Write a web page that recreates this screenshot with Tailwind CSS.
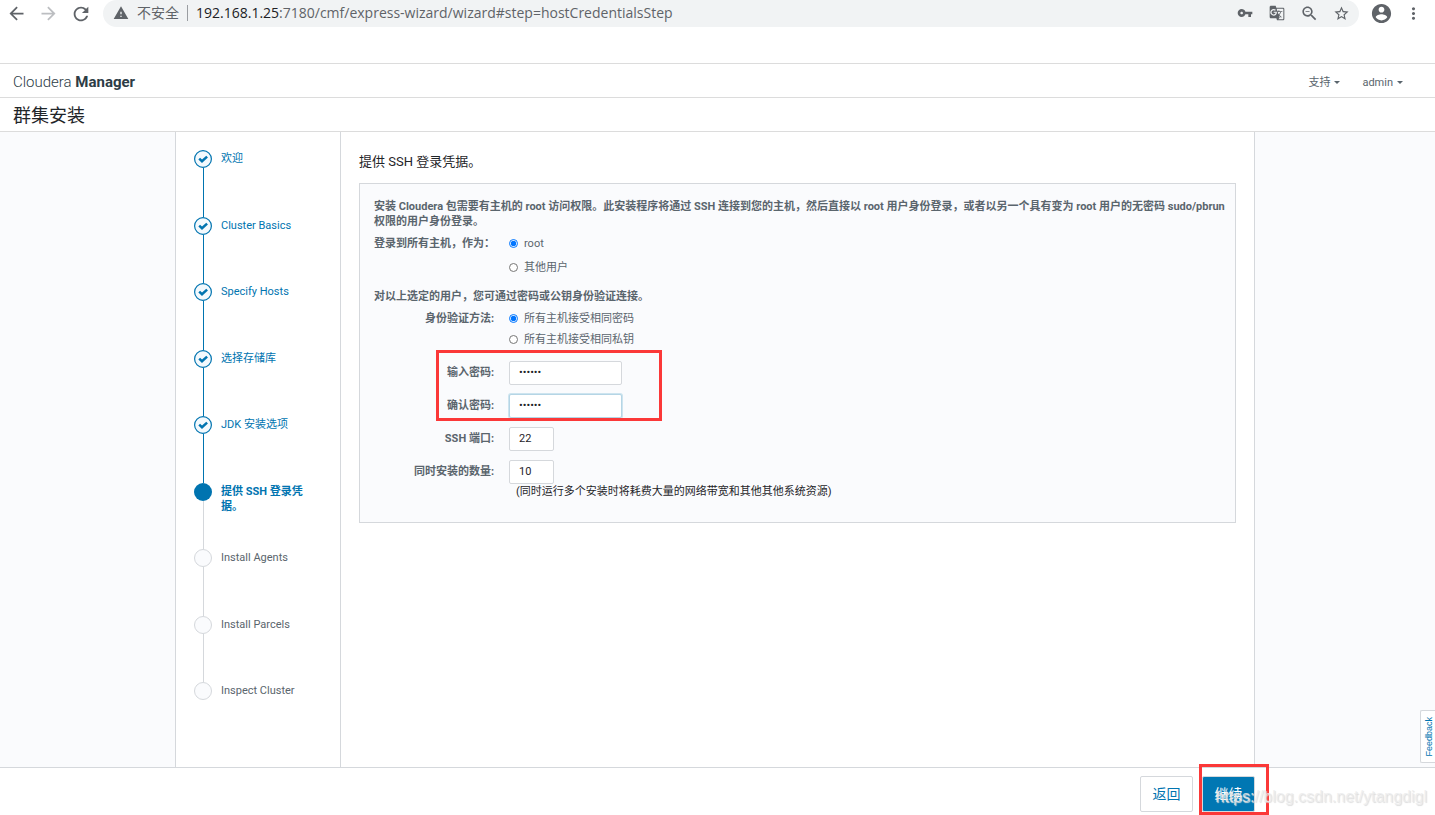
<!DOCTYPE html>
<html lang="zh-CN">
<head>
<meta charset="utf-8">
<title>群集安装 - Cloudera Manager</title>
<script src="https://cdn.jsdelivr.net/npm/@tailwindcss/browser@4"></script>
</head>
<body class="relative flex min-h-screen flex-col bg-white font-['Roboto','Noto_Sans_CJK_SC',sans-serif] text-[11px] leading-[15px] text-[#5a656d]">

<!-- Browser toolbar -->
<div class="flex h-[27px] items-center font-['Open_Sans','Noto_Sans_CJK_SC',sans-serif] text-sm text-[#5f6368]">
  <div class="flex">
    <button aria-label="后退" class="flex w-8 justify-center"><svg class="size-[21px]" viewBox="0 0 24 24" fill="currentColor"><path d="M20 11H7.83l5.59-5.59L12 4l-8 8 8 8 1.41-1.41L7.83 13H20v-2z"/></svg></button>
    <button aria-label="前进" class="flex w-8 justify-center text-[#bcbec1]"><svg class="size-[21px]" viewBox="0 0 24 24" fill="currentColor"><path d="M12 4l-1.41 1.41L16.17 11H4v2h12.17l-5.58 5.59L12 20l8-8z"/></svg></button>
    <button aria-label="重新加载" class="flex w-[33px] justify-center"><svg class="size-[22px]" viewBox="0 0 24 24" fill="currentColor"><path d="M17.65 6.35A7.958 7.958 0 0012 4c-4.42 0-7.99 3.58-7.99 8s3.57 8 7.99 8c3.73 0 6.84-2.55 7.73-6h-2.08A5.99 5.99 0 0112 18c-3.31 0-6-2.69-6-6s2.69-6 6-6c1.66 0 3.14.69 4.22 1.78L13 11h7V4l-2.35 2.35z"/></svg></button>
  </div>
  <div class="mx-[6px] flex h-full flex-1 items-center rounded-full bg-[#f1f3f4] pb-px pl-[10px] pr-[2px]">
    <svg class="size-4" viewBox="0 0 24 24" fill="currentColor"><path d="M1 21h22L12 2 1 21zm12-3h-2v-2h2v2zm0-4h-2v-4h2v4z"/></svg>
    <span class="ml-2">不安全</span>
    <span class="ml-2 mr-2 h-4 w-px bg-[#9a9da1]"></span>
    <span class="flex-1 whitespace-nowrap"><span class="text-[#202124]">192.168.1.25</span>:7180/cmf/express-wizard/wizard#step=hostCredentialsStep</span>
    <button aria-label="密码" class="flex w-8 justify-center"><svg class="size-4" viewBox="0 0 24 24" fill="currentColor"><path d="M12.65 10C11.83 7.67 9.61 6 7 6c-3.31 0-6 2.69-6 6s2.69 6 6 6c2.61 0 4.83-1.67 5.65-4H17v4h4v-4h2v-4H12.65zM7 14c-1.1 0-2-.9-2-2s.9-2 2-2 2 .9 2 2-.9 2-2 2z"/></svg></button>
    <button aria-label="翻译" class="flex w-8 justify-center"><svg class="size-4" viewBox="0 0 24 24" fill="currentColor"><path d="M21 4H11l-1-3H3c-1.1 0-2 .9-2 2v15c0 1.1.9 2 2 2h8l1 3h9c1.1 0 2-.9 2-2V6c0-1.1-.9-2-2-2zM7 16c-2.76 0-5-2.24-5-5s2.24-5 5-5c1.35 0 2.48.5 3.35 1.3L9.03 8.57c-.38-.36-1.04-.78-2.03-.78-1.74 0-3.15 1.44-3.15 3.21S5.26 14.21 7 14.21c2.01 0 2.84-1.44 2.92-2.41H7v-1.71h4.68c.07.31.12.61.12 1.02C11.8 13.97 9.89 16 7 16zm6.17-5.42h3.7c-.43 1.25-1.11 2.43-2.05 3.47-.31-.35-.6-.72-.86-1.1l-.79-2.37zm8.33 9.92c0 .55-.45 1-1 1H14l2-2.5-1.04-3.1 3.1 3.1.92-.92-3.3-3.25.02-.02c1.13-1.25 1.93-2.69 2.4-4.22H20v-1.3h-4.53V8h-1.29v1.29h-1.44L11.46 5.5h9.04c.55 0 1 .45 1 1v14z"/></svg></button>
    <button aria-label="缩小" class="flex w-8 justify-center"><svg class="size-[19px]" viewBox="0 0 24 24" fill="currentColor"><path d="M15.5 14h-.79l-.28-.27C15.41 12.59 16 11.11 16 9.5 16 5.91 13.09 3 9.5 3S3 5.91 3 9.5 5.91 16 9.5 16c1.61 0 3.09-.59 4.23-1.57l.27.28v.79l5 4.99L20.49 19l-4.99-5zm-6 0C7.01 14 5 11.99 5 9.5S7.01 5 9.5 5 14 7.01 14 9.5 11.99 14 9.5 14zM7 9h5v1H7z"/></svg></button>
    <button aria-label="收藏" class="flex w-8 justify-center"><svg class="size-[17px]" viewBox="0 0 24 24" fill="currentColor"><path d="M22 9.24l-7.19-.62L12 2 9.19 8.63 2 9.24l5.46 4.73L5.82 21 12 17.27 18.18 21l-1.63-7.03L22 9.24zM12 15.4l-3.76 2.27 1-4.28-3.32-2.88 4.38-.38L12 6.1l1.71 4.04 4.38.38-3.32 2.88 1 4.28L12 15.4z"/></svg></button>
  </div>
  <div class="flex pr-[6px]">
    <button aria-label="用户" class="flex w-8 items-center justify-center"><svg class="size-[23px]" viewBox="0 0 24 24" fill="currentColor"><path d="M12 2C6.48 2 2 6.48 2 12s4.48 10 10 10 10-4.48 10-10S17.52 2 12 2zm0 3c1.66 0 3 1.34 3 3s-1.34 3-3 3-3-1.34-3-3 1.34-3 3-3zm0 14.2c-2.5 0-4.71-1.28-6-3.22.03-1.99 4-3.08 6-3.08 1.99 0 5.97 1.09 6 3.08-1.29 1.94-3.5 3.22-6 3.22z"/></svg></button>
    <button aria-label="菜单" class="flex w-8 items-center justify-center"><svg class="size-[19px]" viewBox="0 0 24 24" fill="currentColor"><path d="M12 8c1.1 0 2-.9 2-2s-.9-2-2-2-2 .9-2 2 .9 2 2 2zm0 2c-1.1 0-2 .9-2 2s.9 2 2 2 2-.9 2-2-.9-2-2-2zm0 6c-1.1 0-2 .9-2 2s.9 2 2 2 2-.9 2-2-.9-2-2-2z"/></svg></button>
  </div>
</div>

<!-- Product header -->
<header class="mt-9 flex h-[35px] items-center justify-between border-y border-[#dcdcdc] pl-[13px] pr-8 pt-[3px]">
  <a href="#" class="text-[15px] font-light text-[#2d3c46]">Cloudera <b class="font-bold">Manager</b></a>
  <nav class="flex gap-[22px]">
    <button class="flex items-center gap-1">支持<span class="border-x-3 border-t-3 border-x-transparent border-t-[#5a656d]"></span></button>
    <button class="flex items-center gap-1">admin<span class="border-x-3 border-t-3 border-x-transparent border-t-[#5a656d]"></span></button>
  </nav>
</header>
<h1 class="flex h-[34px] items-center border-b border-[#dcdcdc] px-[13px] pt-[2px] text-[18px] text-[#1f2529]">群集安装</h1>

<!-- Wizard -->
<main class="relative flex flex-1 justify-center bg-[#fafbfd] pr-[5px]">
  <div class="flex w-full max-w-[1080px] border-x border-[#d5d8dc] bg-white">
    <aside class="w-[165px] shrink-0 border-r border-[#d5d8dc] py-[18px] pl-[18px] pr-9">
      <ol class="flex h-[550px] flex-col text-[#0074b0]">
        <li class="flex flex-1 gap-[9px]">
          <div class="flex w-[18px] shrink-0 flex-col"><svg class="size-[18px]" viewBox="0 0 18 18" fill="none"><circle cx="9" cy="9" r="8.4" fill="#f3f9fd" stroke="#0074b0" stroke-width="1.2"/><path d="M5.2 8.6l2.8 2.6 5.1-4.6" stroke="#0074b0" stroke-width="2.5"/></svg><span class="ml-[9px] w-px flex-1 bg-[#0074b0]"></span></div>
          <a href="#" class="pt-px">欢迎</a>
        </li>
        <li class="flex flex-1 gap-[9px]">
          <div class="flex w-[18px] shrink-0 flex-col"><svg class="size-[18px]" viewBox="0 0 18 18" fill="none"><circle cx="9" cy="9" r="8.4" fill="#f3f9fd" stroke="#0074b0" stroke-width="1.2"/><path d="M5.2 8.6l2.8 2.6 5.1-4.6" stroke="#0074b0" stroke-width="2.5"/></svg><span class="ml-[9px] w-px flex-1 bg-[#0074b0]"></span></div>
          <a href="#" class="pt-px">Cluster Basics</a>
        </li>
        <li class="flex flex-1 gap-[9px]">
          <div class="flex w-[18px] shrink-0 flex-col"><svg class="size-[18px]" viewBox="0 0 18 18" fill="none"><circle cx="9" cy="9" r="8.4" fill="#f3f9fd" stroke="#0074b0" stroke-width="1.2"/><path d="M5.2 8.6l2.8 2.6 5.1-4.6" stroke="#0074b0" stroke-width="2.5"/></svg><span class="ml-[9px] w-px flex-1 bg-[#0074b0]"></span></div>
          <a href="#" class="pt-px">Specify Hosts</a>
        </li>
        <li class="flex flex-1 gap-[9px]">
          <div class="flex w-[18px] shrink-0 flex-col"><svg class="size-[18px]" viewBox="0 0 18 18" fill="none"><circle cx="9" cy="9" r="8.4" fill="#f3f9fd" stroke="#0074b0" stroke-width="1.2"/><path d="M5.2 8.6l2.8 2.6 5.1-4.6" stroke="#0074b0" stroke-width="2.5"/></svg><span class="ml-[9px] w-px flex-1 bg-[#0074b0]"></span></div>
          <a href="#" class="pt-px">选择存储库</a>
        </li>
        <li class="flex flex-1 gap-[9px]">
          <div class="flex w-[18px] shrink-0 flex-col"><svg class="size-[18px]" viewBox="0 0 18 18" fill="none"><circle cx="9" cy="9" r="8.4" fill="#f3f9fd" stroke="#0074b0" stroke-width="1.2"/><path d="M5.2 8.6l2.8 2.6 5.1-4.6" stroke="#0074b0" stroke-width="2.5"/></svg><span class="ml-[9px] w-px flex-1 bg-[#0074b0]"></span></div>
          <a href="#" class="pt-px">JDK 安装选项</a>
        </li>
        <li class="flex flex-1 gap-[9px]">
          <div class="flex w-[18px] shrink-0 flex-col"><span class="size-[18px] rounded-full bg-[#0074b0]"></span><span class="ml-[9px] w-px flex-1 bg-[#d5d8dc]"></span></div>
          <a href="#" class="pt-px font-bold">提供 SSH 登录凭据。</a>
        </li>
        <li class="flex flex-1 gap-[9px] text-[#5a656d]">
          <div class="flex w-[18px] shrink-0 flex-col"><span class="size-[18px] rounded-full border border-[#d5d8dc] bg-[#fafbfd]"></span><span class="ml-[9px] w-px flex-1 bg-[#d5d8dc]"></span></div>
          <span class="pt-px">Install Agents</span>
        </li>
        <li class="flex flex-1 gap-[9px] text-[#5a656d]">
          <div class="flex w-[18px] shrink-0 flex-col"><span class="size-[18px] rounded-full border border-[#d5d8dc] bg-[#fafbfd]"></span><span class="ml-[9px] w-px flex-1 bg-[#d5d8dc]"></span></div>
          <span class="pt-px">Install Parcels</span>
        </li>
        <li class="flex h-[18px] gap-[9px] text-[#5a656d]">
          <span class="size-[18px] shrink-0 rounded-full border border-[#d5d8dc] bg-[#fafbfd]"></span>
          <span class="pt-px">Inspect Cluster</span>
        </li>
      </ol>
    </aside>

    <section class="min-w-0 flex-1 px-[18px] pt-5">
      <h2 class="text-[13px] leading-5 text-[#1f2529]">提供 SSH 登录凭据。</h2>
      <form class="mt-[11px] border border-[#d5d8dc] bg-[#fafbfd] pb-[23px] pl-[14px] pt-[15px]">
        <p class="font-bold">安装 Cloudera 包需要有主机的 root 访问权限。此安装程序将通过 SSH 连接到您的主机，然后直接以 root 用户身份登录，或者以另一个具有变为 root 用户的无密码 sudo/pbrun 权限的用户身份登录。</p>
        <div class="mt-[7px] grid grid-cols-[120px_1fr] gap-x-[15px]">
          <span id="login-as" class="whitespace-nowrap text-right font-bold">登录到所有主机，作为：</span>
          <div role="radiogroup" aria-labelledby="login-as" class="flex flex-col items-start gap-[9px]">
            <label class="flex items-center gap-[6px]"><input type="radio" name="user" checked class="size-[9px] accent-[#0075ff]">root</label>
            <label class="flex items-center gap-[6px]"><input type="radio" name="user" class="size-[9px] accent-[#0075ff]">其他用户</label>
          </div>
        </div>
        <p class="mt-[14px] font-bold">对以上选定的用户，您可通过密码或公钥身份验证连接。</p>
        <div class="mt-[7px] grid grid-cols-[120px_1fr] gap-x-[15px]">
          <span id="auth-method" class="text-right font-bold">身份验证方法:</span>
          <div role="radiogroup" aria-labelledby="auth-method" class="flex flex-col items-start gap-[6px]">
            <label class="flex items-center gap-[6px]"><input type="radio" name="auth" checked class="size-[9px] accent-[#0075ff]">所有主机接受相同密码</label>
            <label class="flex items-center gap-[6px]"><input type="radio" name="auth" class="size-[9px] accent-[#0075ff]">所有主机接受相同私钥</label>
          </div>
        </div>
        <div class="relative mt-[14px] grid grid-cols-[120px_1fr] items-center gap-x-[15px] gap-y-[9px]">
          <label for="pw" class="pb-[2px] text-right font-bold">输入密码:</label>
          <input id="pw" type="password" value="abcdef" class="h-6 w-[113px] rounded-xs border border-[#d5d8dc] bg-white px-[9px] pb-[2px] text-[#1f2529]">
          <label for="pw2" class="pb-[2px] text-right font-bold">确认密码:</label>
          <input id="pw2" type="password" value="abcdef" class="h-6 w-[113px] rounded-xs border border-[#b5d5e5] bg-white px-[9px] pb-[2px] text-[#1f2529] ring-1 ring-[#cde4ef]">
          <label for="port" class="pb-[2px] text-right font-bold">SSH 端口:</label>
          <input id="port" type="text" value="22" class="h-6 w-[45px] rounded-xs border border-[#d5d8dc] bg-white px-[9px] pb-[2px] text-[#1f2529]">
          <label for="count" class="pb-[2px] text-right font-bold">同时安装的数量:</label>
          <input id="count" type="text" value="10" class="h-6 w-[45px] rounded-xs border border-[#d5d8dc] bg-white px-[9px] pb-[2px] text-[#1f2529]">
          <div class="pointer-events-none absolute -top-[11px] left-[62px] h-[71px] w-[226px] border-3 border-[#fb3838]"></div>
        </div>
        <p class="pl-[142px] text-[#1f2529]">(同时运行多个安装时将耗费大量的网络带宽和其他其他系统资源)</p>
      </form>
    </section>
  </div>
  <button class="absolute bottom-1 right-0 flex h-[53px] w-[15px] items-center justify-center rounded-l-xs border border-r-0 border-[#d5d8dc] bg-white pl-[2px] font-['Liberation_Sans',sans-serif] text-[9px] text-[#0074b0]"><span class="rotate-180 [writing-mode:vertical-rl]">Feedback</span></button>
</main>

<!-- Wizard actions -->
<footer class="relative flex h-12 justify-center border-t border-[#d5d8dc] pr-[5px]">
  <div class="flex w-full max-w-[1080px] justify-end gap-[9px] pt-2 text-sm">
    <button class="h-9 w-[53px] rounded-xs border border-[#d5d8dc] bg-white text-[#0074b0]">返回</button>
    <div class="relative">
      <button class="h-9 w-[53px] rounded-xs border border-[#d5d8dc] bg-[#0077b3] text-white">继续</button>
      <div class="pointer-events-none absolute -left-[3px] -top-3 h-[51px] w-[70px] border-3 border-[#fb3838]"></div>
    </div>
  </div>
  <span class="pointer-events-none absolute right-2 top-[19px] whitespace-nowrap font-['Liberation_Sans',sans-serif] text-[16px] leading-5 text-[#ececec]/80 [text-shadow:1px_1px_1px_#ddd]">https://blog.csdn.net/ytangdigl</span>
</footer>
</body>
</html>
